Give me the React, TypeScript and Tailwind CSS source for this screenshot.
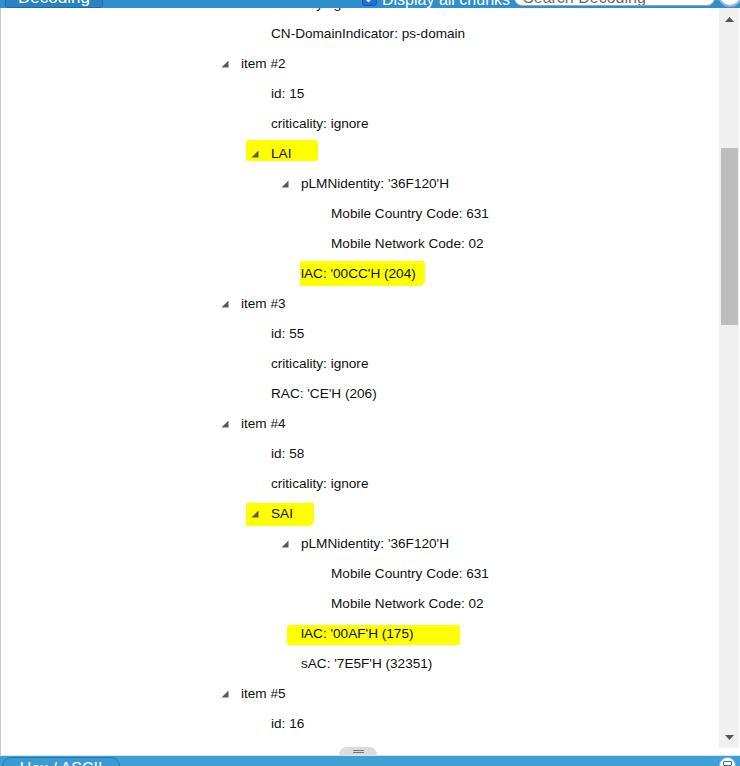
import React from "react";

type Row = {
  level: number;
  text: string;
  expand?: boolean;
  hl?: { left: number; top: number; w: number; h: number; r?: string };
};

const rows: Row[] = [
  { level: 1, text: "criticality: ignore" },
  { level: 1, text: "CN-DomainIndicator: ps-domain" },
  { level: 0, text: "item #2", expand: true },
  { level: 1, text: "id: 15" },
  { level: 1, text: "criticality: ignore" },
  { level: 1, text: "LAI", expand: true, hl: { left: 246, top: 1, w: 72, h: 21, r: "rounded-[2px]" } },
  { level: 2, text: "pLMNidentity: '36F120'H", expand: true },
  { level: 3, text: "Mobile Country Code: 631" },
  { level: 3, text: "Mobile Network Code: 02" },
  { level: 2, text: "lAC: '00CC'H (204)", hl: { left: 300, top: 2, w: 125, h: 25, r: "rounded-br-[6px] rounded-tr-[2px]" } },
  { level: 0, text: "item #3", expand: true },
  { level: 1, text: "id: 55" },
  { level: 1, text: "criticality: ignore" },
  { level: 1, text: "RAC: 'CE'H (206)" },
  { level: 0, text: "item #4", expand: true },
  { level: 1, text: "id: 58" },
  { level: 1, text: "criticality: ignore" },
  { level: 1, text: "SAI", expand: true, hl: { left: 246, top: 4, w: 68, h: 23, r: "rounded-br-[6px]" } },
  { level: 2, text: "pLMNidentity: '36F120'H", expand: true },
  { level: 3, text: "Mobile Country Code: 631" },
  { level: 3, text: "Mobile Network Code: 02" },
  { level: 2, text: "lAC: '00AF'H (175)", hl: { left: 287, top: 6, w: 173, h: 20, r: "rounded-[2px]" } },
  { level: 2, text: "sAC: '7E5F'H (32351)" },
  { level: 0, text: "item #5", expand: true },
  { level: 1, text: "id: 16" },
  { level: 1, text: "criticality: ignore" },
];

const padClass = ["pl-[240px]", "pl-[270px]", "pl-[300px]", "pl-[330px]"];

function Tri() {
  return (
    <svg width="8" height="8" viewBox="0 0 8 8" className="block">
      <polygon points="7.5,0.5 7.5,7.5 0.5,7.5" fill="#5a5a5a" />
    </svg>
  );
}

function TreeRow({ r }: { r: Row }) {
  return (
    <div className={`relative h-[30px] flex items-center ${padClass[r.level]}`}>
      {r.hl && (
        <span
          className={`absolute bg-[#ffff00] ${r.hl.r ?? ""}`}
          style={{ left: r.hl.left - 1, top: r.hl.top, width: r.hl.w, height: r.hl.h }}
        />
      )}
      <span className="relative w-[20px] -ml-[20px] flex items-center">{r.expand ? <Tri /> : null}</span>
      <span className="relative text-[13.6px] text-[#111] whitespace-nowrap leading-none">{r.text}</span>
    </div>
  );
}

export default function App() {
  return (
    <div
      className="w-[740px] h-[766px] overflow-hidden bg-white flex flex-col"
      style={{ fontFamily: "Tahoma, 'Liberation Sans', Arial, sans-serif" }}
    >
      {/* top bar */}
      <div className="h-[8px] shrink-0 bg-[#2f8fcd] flex items-end overflow-hidden relative">
        <div className="ml-[5px] w-[98px] h-[30px] shrink-0 bg-[#2a82c2] border border-[#1f6aa3] rounded-b-[3px] flex items-end justify-center pb-[1px]">
          <span className="text-white text-[17px] leading-none" style={{ fontFamily: "'Liberation Sans', Arial, sans-serif" }}>Decoding</span>
        </div>
        <div className="ml-[259px] w-[15px] h-[15px] shrink-0 mb-[2px] rounded-[3px] bg-[#1a6fd8] border border-[#1557a8] flex items-center justify-center">
          <svg width="11" height="11" viewBox="0 0 11 11"><path d="M2 5.5 L4.5 8 L9 2.5" stroke="#fff" strokeWidth="2" fill="none" /></svg>
        </div>
        <span className="ml-[5px] text-white text-[16px] leading-none whitespace-nowrap" style={{ fontFamily: "'Liberation Sans', Arial, sans-serif" }}>Display all chunks</span>
        <div className="ml-[4px] w-[201px] h-[22px] shrink-0 mb-[2px] rounded-[8px] bg-white border border-[#9aa9b5] flex items-end px-[8px] overflow-hidden">
          <span className="text-[#6b6b6b] text-[16px] leading-none -mb-[1px] whitespace-nowrap" style={{ fontFamily: "'Liberation Sans', Arial, sans-serif" }}>Search Decoding</span>
        </div>
        <div className="ml-[3px] w-[24px] h-[24px] shrink-0 mb-[1px] rounded-full bg-white border-2 border-[#9ab8d2]" />
      </div>

      {/* main */}
      <div className="flex-1 flex min-h-0 border-l border-[#c8c8c8]">
        <div className="flex-1 min-w-0 flex flex-col">
          <div className="h-[741px] overflow-hidden">
            <div className="-mt-[19px]">
              {rows.map((r, i) => (
                <TreeRow key={i} r={r} />
              ))}
            </div>
          </div>
          <div className="flex-1 flex justify-center">
            <div className="-mt-[1px] mr-[4px] w-[38px] h-[8px] bg-[#dcdcdc] rounded-t-[10px] flex items-center justify-center">
              <div className="w-[11px] flex flex-col gap-[1px]">
                <div className="h-[1px] bg-[#777]" />
                <div className="h-[1px] bg-[#777]" />
              </div>
            </div>
          </div>
        </div>
        <div className="w-[20px] mr-[1px] h-[740px] bg-[#f0f0f0] flex flex-col items-center">
          <div className="h-[14px] flex items-end justify-center">
            <svg width="9" height="5" viewBox="0 0 9 5"><polygon points="4.5,0 9,5 0,5" fill="#555" /></svg>
          </div>
          <div className="mt-[126px] w-[17px] ml-[1px] h-[177px] bg-[#bdbdbd]" />
          <div className="flex-1" />
          <div className="h-[14px] flex items-start justify-center pt-[1px]">
            <svg width="9" height="5" viewBox="0 0 9 5"><polygon points="0,0 9,0 4.5,5" fill="#555" /></svg>
          </div>
        </div>
      </div>

      {/* bottom bar */}
      <div className="h-[11px] shrink-0 bg-[#3e9fd9] flex items-start overflow-hidden relative border-t border-[#d6e6f1]">
        <div className="ml-[2px] mt-[1px] w-[118px] h-[24px] rounded-t-[9px] border border-[#2a78b0] bg-[#3a9ad4] flex justify-center pt-[3px]">
          <span className="text-white text-[16px] leading-none" style={{ fontFamily: "'Liberation Sans', Arial, sans-serif" }}>Hex / ASCII</span>
        </div>
        <div className="flex-1" />
        <div className="mr-[4px] mt-[1px] w-[17px] h-[17px] rounded-full bg-white border border-[#7fb2d8] flex items-start justify-center pt-[3px]">
          <div className="w-[9px] h-[5px] border border-[#2a78b0] rounded-[1px]" />
        </div>
      </div>
    </div>
  );
}
